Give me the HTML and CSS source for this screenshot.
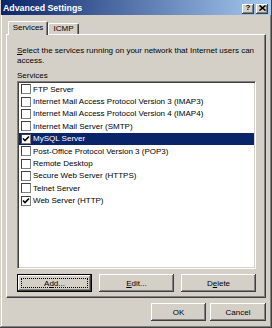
FILE: index.html
```html
<!DOCTYPE html>
<html>
<head>
<meta charset="utf-8">
<link rel="stylesheet" href="styles.css">
</head>
<body>
<div class="window">
  <div class="titlebar">
    <span class="title">Advanced Settings</span>
    <div class="caption-btns">
      <span class="cbtn help">?</span>
      <span class="cbtn close"><svg width="7" height="6" viewBox="0 0 7 6"><path d="M0.5 0.5 L6.5 5.5 M6.5 0.5 L0.5 5.5" stroke="#000" stroke-width="1.6" fill="none"/></svg></span>
    </div>
  </div>
  <div class="content">
    <div class="tabs">
      <div class="tab active">Services</div>
      <div class="tab">ICMP</div>
    </div>
    <div class="panel">
      <p class="desc"><u>S</u>elect the services running on your network that Internet users can<br>access.</p>
      <div class="label">Services</div>
      <div class="listbox">
        <div class="row"><span class="cb"></span><span>FTP Server</span></div>
        <div class="row"><span class="cb"></span><span>Internet Mail Access Protocol Version 3 (IMAP3)</span></div>
        <div class="row"><span class="cb"></span><span>Internet Mail Access Protocol Version 4 (IMAP4)</span></div>
        <div class="row"><span class="cb"></span><span>Internet Mail Server (SMTP)</span></div>
        <div class="row selected"><span class="cb"><svg width="8" height="8" viewBox="0 0 8 8"><path d="M1 3.5 L3 5.5 L7 1.5" stroke="#000" stroke-width="1.6" fill="none"/></svg></span><span>MySQL Server</span></div>
        <div class="row"><span class="cb"></span><span>Post-Office Protocol Version 3 (POP3)</span></div>
        <div class="row"><span class="cb"></span><span>Remote Desktop</span></div>
        <div class="row"><span class="cb"></span><span>Secure Web Server (HTTPS)</span></div>
        <div class="row"><span class="cb"></span><span>Telnet Server</span></div>
        <div class="row"><span class="cb"><svg width="8" height="8" viewBox="0 0 8 8"><path d="M1 3.5 L3 5.5 L7 1.5" stroke="#000" stroke-width="1.6" fill="none"/></svg></span><span>Web Server (HTTP)</span></div>
      </div>
      <div class="list-btns">
        <button class="btn default">A<u>d</u>d...</button>
        <button class="btn"><u>E</u>dit...</button>
        <button class="btn">D<u>e</u>lete</button>
      </div>
    </div>
    <div class="footer">
      <button class="btn ok">OK</button>
      <button class="btn cancel">Cancel</button>
    </div>
  </div>
</div>
</body>
</html>
```
FILE: styles.css
```css
* { box-sizing: border-box; }
body {
  margin: 0;
  font-family: "Liberation Sans", Arial, sans-serif;
  font-size: 8px;
  color: #000;
}
.window {
  width: 272px;
  height: 328px;
  background: #d4d0c8;
  box-shadow: inset -1px -1px #404040, inset 1px 0 #d4d0c8, inset -2px -2px #808080, inset 2px 0 #fff;
  padding: 0 1px;
  display: flex;
  flex-direction: column;
}
.titlebar {
  height: 15px;
  background: linear-gradient(to right, #0a246a, #a6caf0);
  display: flex;
  align-items: center;
  justify-content: space-between;
  padding: 0 3px 0 2px;
}
.title {
  color: #fff;
  font-weight: bold;
  font-size: 8.8px;
}
.caption-btns {
  display: flex;
  gap: 2px;
  margin-top: 2px;
}
.cbtn {
  width: 12px;
  height: 10px;
  background: #d4d0c8;
  box-shadow: inset -1px -1px #404040, inset 1px 1px #fff, inset -2px -2px #808080;
  display: flex;
  align-items: center;
  justify-content: center;
}
.help {
  font-weight: bold;
  font-size: 8px;
  line-height: 10px;
  padding-bottom: 1px;
}
.close svg { display: block; margin-bottom: 1px; }
.content {
  padding: 6px 5px 0 5px;
}
.tabs {
  display: flex;
  align-items: flex-end;
  height: 13px;
  padding-left: 2px;
}
.tab {
  height: 11px;
  line-height: 10px;
  background: #d4d0c8;
  border-top: 1px solid #fff;
  border-left: 1px solid #fff;
  border-right: 1px solid #404040;
  box-shadow: inset -1px 0 #808080;
  border-radius: 2px 2px 0 0;
  text-align: center;
  width: 31px;
}
.tab.active {
  width: 40px;
  height: 14px;
  line-height: 12px;
  margin-bottom: -1px;
  position: relative;
  z-index: 1;
}
.panel {
  height: 264px;
  border-top: 1px solid #fff;
  border-left: 1px solid #fff;
  border-right: 1px solid #404040;
  border-bottom: 1px solid #404040;
  box-shadow: inset -1px -1px #808080;
  padding: 11px 0 0 10px;
}
.desc {
  margin: 0;
  line-height: 10px;
  white-space: nowrap;
}
.label {
  margin-top: 5px;
  line-height: 10px;
}
.listbox {
  width: 239px;
  height: 188px;
  background: #fff;
  border: 1px solid;
  border-color: #808080 #fff #fff #808080;
  box-shadow: inset 1px 1px #404040, inset -1px -1px #d4d0c8;
  padding: 1px;
}
.row {
  height: 12.4px;
  display: flex;
  align-items: center;
  gap: 2px;
  padding-left: 2px;
  white-space: nowrap;
}
.row.selected {
  background: #0a246a;
  color: #fff;
}
.cb {
  width: 10px;
  height: 10px;
  flex: none;
  background: #fff;
  border: 1px solid;
  border-color: #404040 #808080 #808080 #404040;
  display: flex;
  align-items: center;
  justify-content: center;
}
.cb svg { display: block; }
.list-btns {
  width: 239px;
  margin-top: 5px;
  display: flex;
  justify-content: space-between;
}
.btn {
  font: inherit;
  color: #000;
  border: 0;
  padding: 0;
  margin: 0;
  height: 18px;
  background: #d4d0c8;
  box-shadow: inset -1px -1px #404040, inset 1px 1px #fff, inset -2px -2px #808080;
  text-align: center;
}
.list-btns .btn { width: 75px; }
.btn.default {
  position: relative;
  border: 1px solid #000;
}
.btn.default::after {
  content: "";
  position: absolute;
  left: 3px; top: 3px; right: 3px; bottom: 3px;
  border: 1px dotted #000;
}
.footer {
  margin-top: 5px;
  display: flex;
  justify-content: flex-end;
  gap: 4px;
}
.btn.ok { width: 55px; }
.btn.cancel { width: 56px; }
```
